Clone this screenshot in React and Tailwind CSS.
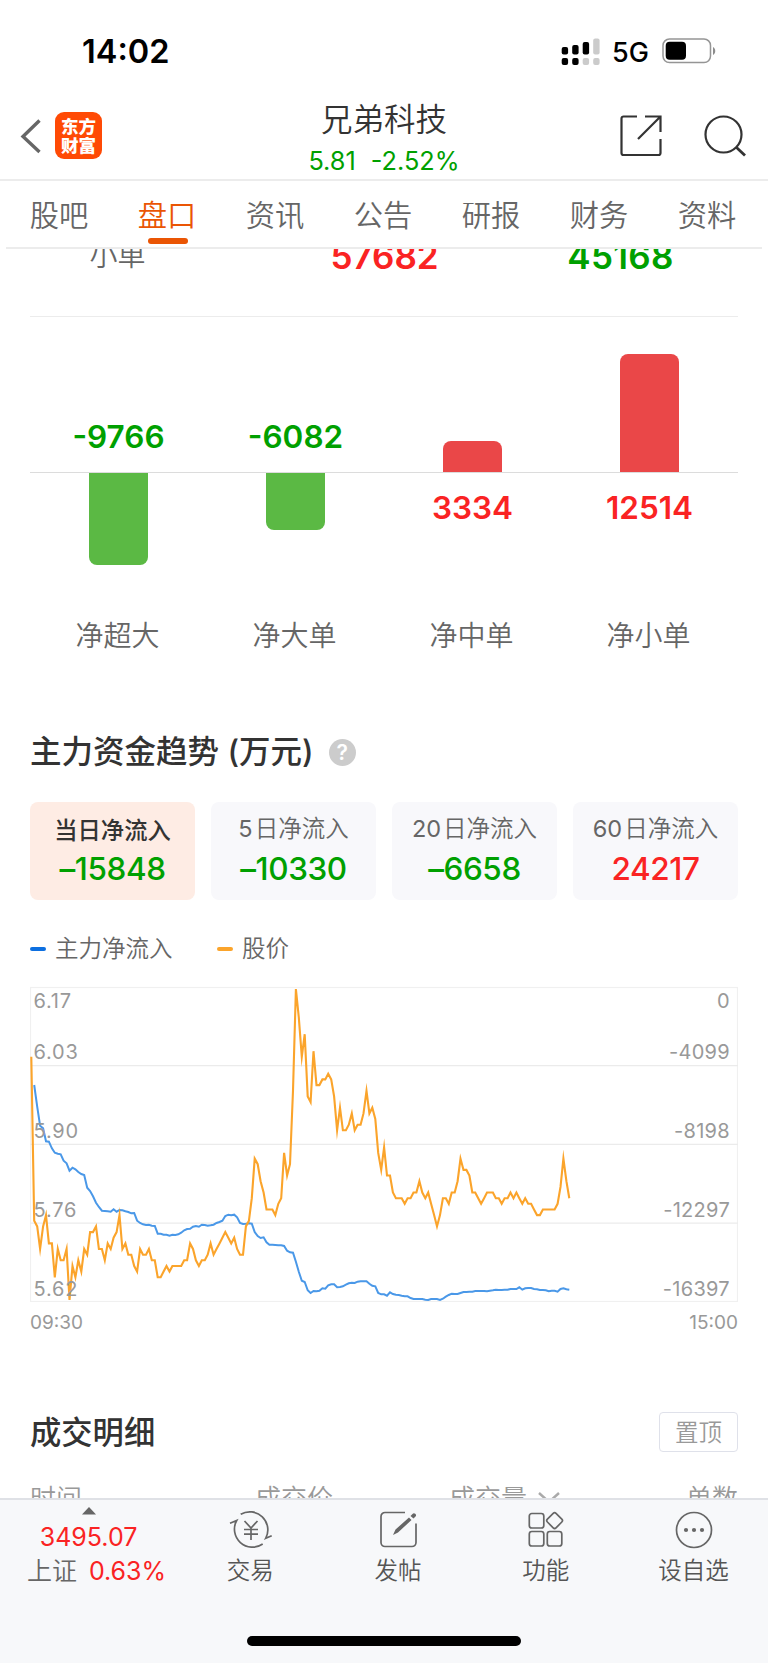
import clsx from 'clsx';

const tabs = ['股吧', '盘口', '资讯', '公告', '研报', '财务', '资料'];

const netOrders = [
  { label: '净超大', value: -9766 },
  { label: '净大单', value: -6082 },
  { label: '净中单', value: 3334 },
  { label: '净小单', value: 12514 },
];

const periods = [
  { days: '当', value: -15848, active: true },
  { days: '5', value: -10330 },
  { days: '20', value: -6658 },
  { days: '60', value: 24217 },
];

// cents below the day high (6.17), one entry per minute from 09:30
const priceDrops = [
  12, 41, 42, 46, 42, 40, 45, 45, 51, 46, 48, 48, 46, 55, 49, 51, 48, 50, 46, 47,
  43, 43, 42, 46, 46, 48, 45, 46, 44, 43, 40, 46, 45, 47, 47, 49, 50, 46, 47, 47,
  46, 48, 48, 51, 51, 50, 49, 50, 49, 49, 49, 49, 48, 48, 45, 46, 48, 49, 48, 48,
  47, 45, 47, 46, 45, 44, 43, 44, 45, 44, 46, 47, 47, 42, 41, 37, 30, 31, 34, 36,
  39, 39, 39, 40, 38, 37, 29, 33, 31, 18, 0, 5, 12, 8, 19, 20, 11, 17, 17, 16,
  16, 15, 16, 19, 25, 21, 25, 25, 24, 22, 25, 24, 24, 22, 18, 22, 21, 23, 29, 32,
  28, 33, 33, 36, 37, 37, 37, 38, 37, 37, 36, 36, 34, 36, 37, 36, 38, 40, 42, 40,
  37, 37, 38, 36, 36, 34, 30, 32, 32, 33, 36, 36, 37, 38, 37, 36, 36, 36, 37, 37,
  38, 37, 37, 36, 37, 36, 37, 38, 37, 38, 38, 39, 40, 40, 39, 39, 39, 39, 39, 38,
  35, 30, 34, 37,
];

// starts one minute after the price line
const flow = [
  345, 410, 467, 475, 514, 515, 535, 548, 551, 553, 572, 580, 602, 593, 598, 606, 612, 615, 653, 663,
  679, 698, 711, 722, 723, 724, 725, 718, 725, 720, 721, 724, 726, 730, 729, 752, 759, 763, 765, 764,
  767, 768, 791, 791, 794, 794, 797, 794, 795, 793, 788, 781, 777, 776, 770, 768, 770, 764, 765, 767,
  766, 764, 759, 756, 752, 738, 734, 736, 734, 742, 759, 762, 761, 760, 761, 786, 798, 804, 802, 817,
  824, 824, 825, 826, 826, 828, 842, 847, 848, 875, 905, 932, 936, 961, 969, 963, 964, 962, 955, 956,
  946, 943, 943, 952, 951, 949, 944, 940, 938, 939, 935, 934, 934, 934, 941, 947, 949, 969, 973, 973,
  977, 967, 972, 974, 975, 977, 979, 979, 984, 987, 987, 987, 987, 989, 990, 987, 987, 987, 990, 986,
  980, 975, 971, 972, 972, 969, 966, 966, 965, 965, 963, 963, 963, 963, 964, 962, 961, 959, 960, 960,
  959, 959, 957, 957, 957, 952, 959, 955, 954, 954, 957, 958, 960, 960, 961, 964, 962, 962, 965, 957,
  955, 958, 959,
];

const minuteX = (i) => 1.3 + i * 2.94;
const pricePoints = priceDrops.map((d, i) => `${minuteX(i).toFixed(1)},${(3 + d * 5.653).toFixed(1)}`).join(' ');
const flowPoints = flow.map((y, i) => `${minuteX(i + 1).toFixed(1)},${(y / 3 - 16).toFixed(1)}`).join(' ');

const axis = [
  { price: '6.17', flow: '0', y: 22 },
  { price: '6.03', flow: '-4099', y: 73.2 },
  { price: '5.90', flow: '-8198', y: 152.2 },
  { price: '5.76', flow: '-12297', y: 231 },
  { price: '5.62', flow: '-16397', y: 310 },
];

const StatusBar = () => (
  <div className="flex h-[102px] shrink-0 items-center pl-[82px] text-black">
    <span className="w-[479px] pt-[2px] text-[32.500px] font-semibold leading-none">14:02</span>
    <svg width="39" height="28" viewBox="0 0 39 28" className="mt-[1px]">
      <rect x="0.7" y="9" width="6.4" height="7.6" rx="2" />
      <rect x="11.2" y="7" width="6.4" height="9.6" rx="2" />
      <rect x="21.7" y="4" width="6.4" height="12.6" rx="2" />
      <rect x="32.2" y="0.5" width="6.4" height="16.1" rx="2" fill="#cbcbcb" />
      <rect x="0.7" y="20" width="6.4" height="7" rx="2" />
      <rect x="11.2" y="20" width="6.4" height="7" rx="2" />
      <rect x="21.7" y="20" width="6.4" height="7" rx="2" fill="#cbcbcb" />
      <rect x="32.2" y="20" width="6.4" height="7" rx="2" fill="#cbcbcb" />
    </svg>
    <span className="ml-[12px] w-[50px] pt-[2px] text-[27px] font-medium leading-none">5G</span>
    <svg width="55" height="26" viewBox="0 0 55 26">
      <rect x="1" y="1" width="47.5" height="23.6" rx="6.5" fill="none" stroke="#959595" strokeWidth="1.5" />
      <rect x="3.7" y="3.8" width="20.3" height="18" rx="4" />
      <path d="M51 9v8c3-1.5 3-6.500 0-8z" fill="#8c8c8c" />
    </svg>
  </div>
);

const Header = () => (
  <div className="flex h-[79px] shrink-0 items-center border-b-2 border-[#ececec]">
    <div className="flex w-[256px] items-center pb-[10px] pl-[20px]">
      <svg width="22" height="36" viewBox="0 0 22 36" fill="none" stroke="#666" strokeWidth="3.4">
        <path d="M19.500 2.500L3 18.500l16.500 15.500" />
      </svg>
      <div className="ml-[13px] flex h-[47px] w-[47px] flex-col items-center justify-center rounded-[9px] bg-[#ff4a05] text-[17.500px] font-black leading-[19px] text-white">
        <span>东方</span>
        <span>财富</span>
      </div>
    </div>
    <div className="flex w-[256px] flex-col items-center pb-px">
      <h1 className="text-[31.500px] font-[350] leading-[42px] text-[#333]">兄弟科技</h1>
      <div className="flex gap-[15px] text-[25.300px] leading-[40px] text-[#00a000]">
        <span>5.81</span>
        <span>-2.52%</span>
      </div>
    </div>
    <div className="flex flex-1 items-center pb-[9px] pl-[108px]">
      <svg width="42" height="42" viewBox="0 0 42 42" fill="none" stroke="#333" strokeWidth="2.200">
        <path d="M17 1.500H3.500a2 2 0 0 0-2 2V38a2 2 0 0 0 2 2H38.500a2 2 0 0 0 2-2V24M25 1.500H40.500V17M40.500 1.500L18 24" />
      </svg>
      <svg width="42" height="42" viewBox="0 0 42 42" fill="none" stroke="#333" strokeWidth="2.200" className="ml-[42px]">
        <circle cx="19.500" cy="19.500" r="18" />
        <path d="M32 32l9 8.500" strokeWidth="2.800" />
      </svg>
    </div>
  </div>
);

const Tabs = () => (
  <div className="mx-[6px] flex h-[68px] shrink-0 border-b-2 border-[#ececec]">
    {tabs.map((tab) => (
      <div
        key={tab}
        className={clsx(
          'relative flex w-[108px] justify-center pr-[2px] pt-[2px] text-[29.300px] font-[350] leading-[66px]',
          tab === '盘口' ? 'text-[#ea5504]' : 'text-[#666]'
        )}
      >
        {tab}
        {tab === '盘口' && <span className="absolute bottom-[3px] left-[34px] h-[6px] w-[40px] rounded-full bg-[#ea5504]" />}
      </div>
    ))}
  </div>
);

const NetBar = ({ label, value }) => {
  const height = Math.abs(value) * 0.00943;
  const up = value > 0;
  return (
    <div className="flex w-[177px] flex-col items-center">
      <div className="flex h-[157px] w-full flex-col items-center justify-end border-b border-[#dcdcdc]">
        {up ? (
          <div className="w-[59px] rounded-t-[8px] bg-[#ea4748]" style={{ height }} />
        ) : (
          <span className="mb-[14px] text-[31.500px] font-semibold leading-[42px] text-[#00a000]">{value}</span>
        )}
      </div>
      <div className="flex h-[141px] flex-col items-center">
        {up ? (
          <span className="mt-[14px] text-[31.500px] font-semibold leading-[42px] text-[#fa2323]">{value}</span>
        ) : (
          <div className="w-[59px] rounded-b-[8px] bg-[#5bb944]" style={{ height }} />
        )}
      </div>
      <span className="pr-[2px] text-[28px] font-[350] leading-[46px] text-[#666]">{label}</span>
    </div>
  );
};

const Periods = () => (
  <div className="flex gap-4">
    {periods.map(({ days, value, active }) => (
      <div
        key={days}
        className={clsx(
          'flex h-[98px] w-[165px] flex-col items-center rounded-[8px] pt-[9px]',
          active ? 'bg-[#feece4]' : 'bg-[#f8f8fb]'
        )}
      >
        <span
          className={clsx(
            'leading-[36px]',
            active ? 'pt-[2px] text-[23.300px] font-medium text-[#333]' : 'text-[23.500px] font-[350] text-[#666]'
          )}
        >
          <span className={active ? '' : 'mr-[2px] font-normal'}>{days}</span>
          日净流入
        </span>
        <span
          className={clsx(
            'text-[31.500px] font-medium tracking-[-0.4px]',
            active ? 'leading-[40px]' : 'leading-[44px]',
            value > 0 ? 'text-[#fa2323]' : 'text-[#00a000]'
          )}
        >
          {value > 0 ? value : `–${-value}`}
        </span>
      </div>
    ))}
  </div>
);

const TrendChart = () => (
  <svg width="708" height="316" viewBox="0 0 708 316" className="block">
    <g fill="none" stroke="#ebebeb" strokeWidth="1.200">
      <rect x="0.500" y="1.500" width="707" height="314" stroke="#f0f0f0" />
      <path d="M0 79.700H708M0 158.400H708M0 237.200H708" />
    </g>
    <polyline points={flowPoints} fill="none" stroke="#4a98e8" strokeWidth="2" />
    <polyline points={pricePoints} fill="none" stroke="#fba42b" strokeWidth="2.100" strokeMiterlimit="10" />
    <g fill="#999" fontSize="20">
      {axis.map((row) => (
        <g key={row.price}>
          <text x="3.500" y={row.y} letterSpacing="0.8">{row.price}</text>
          <text x="700" y={row.y} letterSpacing="0.3" textAnchor="end">{row.flow}</text>
        </g>
      ))}
    </g>
  </svg>
);

const NavItem = ({ label, children }) => (
  <div className="flex w-[147.700px] flex-col items-center pt-[8px]">
    <svg width="44" height="44" viewBox="0 0 44 44" fill="none" stroke="#666" strokeWidth="1.700">
      {children}
    </svg>
    <span className="pr-px text-[23.500px] font-[350] leading-[37px] text-[#555]">{label}</span>
  </div>
);

const Footer = () => (
  <div className="flex h-[165px] shrink-0 flex-col border-t-2 border-[#dfe1e6] bg-[#f7f8fa]">
    <div className="flex h-[136px]">
      <div className="flex w-[177px] flex-col items-center pt-[7px]">
        <svg width="14" height="8" viewBox="0 0 14 8" fill="#666">
          <path d="M0 7.500L7 0l7 7.500z" />
        </svg>
        <span className="mt-[5px] text-[25px] leading-[34px] text-[#fa2323]">3495.07</span>
        <div className="mr-[-16px] flex items-center gap-[12px] text-[25px] leading-[34px]">
          <span className="font-[350] text-[#666]">上证</span>
          <span className="text-[#fa2323]">0.63%</span>
        </div>
      </div>
      <NavItem label="交易">
        <path d="M11.700 6.300A18 18 0 0 1 36.700 30.300l6-2.600M33.700 36A18 18 0 0 1 7.700 12.500l-6.700 2.800" />
        <path d="M15.500 13l6.500 7 6.500-7M22 20V32M15 21.500h14M15 26.200h14" />
      </NavItem>
      <NavItem label="发帖">
        <path d="M28 4.500H8a4 4 0 0 0-4 4V34.500a4 4 0 0 0 4 4H35a4 4 0 0 0 4-4V15.500" />
        <path d="M16 27l2.500-5.500L32 9.500l2.500 2.500L21 24.500zM33.500 8l2-2a1.700 1.700 0 0 1 3 2.500l-2 2z" fill="#666" stroke="none" />
      </NavItem>
      <NavItem label="功能">
        <rect x="5.300" y="5.500" width="14.500" height="14.500" rx="2.500" />
        <rect x="5.300" y="23.500" width="14.500" height="14.500" rx="2.500" />
        <rect x="23.300" y="23.500" width="14.500" height="14.500" rx="2.500" />
        <rect x="24.500" y="6.500" width="12.200" height="12.200" rx="2" transform="rotate(45 30.600 12.600)" />
      </NavItem>
      <NavItem label="设自选">
        <circle cx="22" cy="22" r="17.500" />
        <g fill="#666" stroke="none">
          <circle cx="14" cy="22" r="2.100" />
          <circle cx="22" cy="22" r="2.100" />
          <circle cx="30" cy="22" r="2.100" />
        </g>
      </NavItem>
    </div>
    <div className="mx-auto h-[10px] w-[274px] rounded-full bg-black" />
  </div>
);

const App = () => (
  <div className="flex h-[1663px] w-[768px] flex-col overflow-hidden bg-white font-['Inter','Noto_Sans_CJK_SC',sans-serif]">
    <StatusBar />
    <Header />
    <Tabs />

    <div className="flex h-[1249px] shrink-0 flex-col overflow-hidden px-[30px] *:shrink-0">
      {/* Order table, scrolled under the tabs */}
      <div className="mt-[-17px] flex h-[85px] items-start border-b border-[#ececec] leading-[49px]">
        <span className="w-[177px] pr-[2px] text-center text-[28px] font-[350] text-[#666]">小单</span>
        <span className="w-[355px] text-center text-[35px] font-semibold text-[#fa2323]">57682</span>
        <span className="w-[117px] text-center text-[35px] font-semibold tracking-[0.3px] text-[#00a000]">45168</span>
      </div>

      <div className="flex h-[342px]">
        {netOrders.map((item) => (
          <NetBar key={item.label} {...item} />
        ))}
      </div>

      <div className="mt-[67px] flex h-[52px] items-center">
        <h2 className="whitespace-pre text-[31.500px] font-medium text-[#333]">主力资金趋势 (万元)</h2>
        <span className="ml-[15px] flex h-[27px] w-[27px] items-center justify-center rounded-full bg-[#ccc] text-[21px] font-semibold leading-none text-white">
          ?
        </span>
      </div>

      <div className="mt-[24px]">
        <Periods />
      </div>

      {/* Legend */}
      <div className="mt-[31px] flex h-[36px] items-center text-[23.500px] font-[350] text-[#666]">
        <span className="h-[4px] w-[16px] rounded-full bg-[#0d6fe0]" />
        <span className="ml-[9px] w-[162px]">主力净流入</span>
        <span className="h-[4px] w-[16px] rounded-full bg-[#fba42b]" />
        <span className="ml-[9px]">股价</span>
      </div>

      <div className="mt-[19px]">
        <TrendChart />
        <div className="mt-[7px] flex h-[28px] items-center justify-between text-[19px] text-[#999]">
          <span>09:30</span>
          <span>15:00</span>
        </div>
      </div>

      <div className="mt-[75px] flex h-[40px] items-center justify-between">
        <h2 className="pt-[2px] text-[31.300px] font-medium text-[#333]">成交明细</h2>
        <button className="h-[40px] w-[79px] rounded-[4px] border-[1.500px] border-[#dfe1ea] pt-px text-[23.500px] font-[350] leading-none text-[#999]">
          置顶
        </button>
      </div>

      <div className="mt-[29px] flex h-[40px] text-[26px] font-[350] leading-[36px] text-[#999]">
        <span className="w-[225px]">时间</span>
        <span className="w-[194px]">成交价</span>
        <span>成交量</span>
        <svg width="22" height="12" viewBox="0 0 22 12" fill="none" stroke="#aaa" strokeWidth="2.500" className="ml-[11px] mt-[11px]">
          <path d="M1 1l10 9 10-9" />
        </svg>
        <span className="ml-auto">单数</span>
      </div>
    </div>

    <Footer />
  </div>
);

export default App;
